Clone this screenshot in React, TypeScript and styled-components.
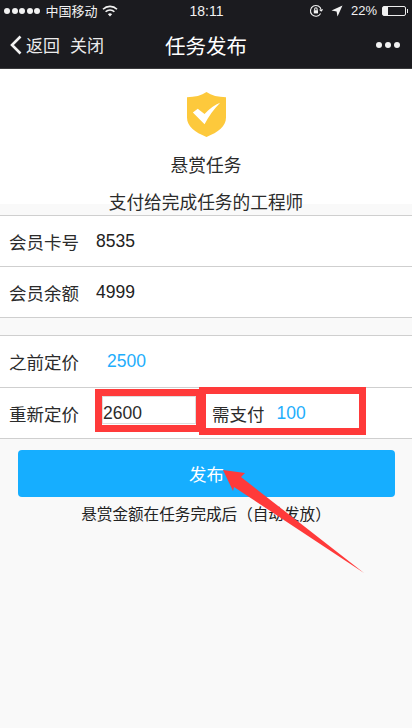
import styled, { createGlobalStyle } from "styled-components";

const GlobalStyle = createGlobalStyle`
  html, body {
    margin: 0;
    padding: 0;
    background: #f9f9f9;
  }
  body {
    font-family: "Liberation Sans", "Noto Sans CJK SC", sans-serif;
    color: #2b2b2b;
  }
  * {
    box-sizing: border-box;
  }
`;

const Page = styled.div`
  position: relative;
  width: 412px;
  height: 728px;
  overflow: hidden;
`;

const TopBar = styled.header`
  height: 69px;
  background: #1b1b1f;
  color: #fff;
  border-bottom: 1px solid #3a3a3c;
`;

const StatusBar = styled.div`
  display: grid;
  grid-template-columns: 1fr auto 1fr;
  align-items: center;
  height: 21px;
  padding: 0 3px 0 4px;
  font-size: 13px;
  color: #f2f2f2;
`;

const StatusSide = styled.div<{ $end?: boolean }>`
  display: flex;
  align-items: center;
  gap: 5px;
  justify-content: ${(p) => (p.$end ? "flex-end" : "flex-start")};
`;

const Dots = styled.div`
  display: flex;
  gap: 1.600px;
`;

const Dot = styled.span`
  width: 6px;
  height: 6px;
  border-radius: 50%;
  background: #f2f2f2;
`;

const Clock = styled.span`
  font-size: 14px;
  font-weight: 500;
`;

const Battery = styled.div`
  position: relative;
  width: 24px;
  height: 10px;
  border: 1px solid #eee;
  border-radius: 2px;
  margin-right: 3px;
  &::before {
    content: "";
    display: block;
    width: 5px;
    height: 100%;
    background: #f2f2f2;
  }
  &::after {
    content: "";
    position: absolute;
    right: -3px;
    top: 2px;
    width: 1px;
    height: 4px;
    background: #eee;
  }
`;

const LocationIcon = styled.svg`
  margin: 0 3px;
`;

const NavBar = styled.nav`
  display: grid;
  grid-template-columns: 1fr auto 1fr;
  align-items: center;
  height: 47px;
  padding: 0 9px;
`;

const NavLeft = styled.div`
  display: flex;
  align-items: center;
  font-size: 17px;
  color: #ececec;
`;

const BackIcon = styled.svg`
  margin-right: 4px;
`;

const CloseLink = styled.span`
  margin-left: 10px;
`;

const NavTitle = styled.h1`
  margin: 0;
  font-size: 20.5px;
  font-weight: 400;
`;

const More = styled.div`
  display: flex;
  justify-content: flex-end;
  gap: 3px;
  margin-right: 3px;
  & > span {
    width: 6px;
    height: 6px;
    border-radius: 50%;
    background: #f2f2f2;
  }
`;

const Intro = styled.section`
  display: flex;
  flex-direction: column;
  align-items: center;
  height: 135px;
  padding-top: 23px;
  background: #fff;
  font-size: 17.7px;
`;

const Shield = styled.svg`
  flex-shrink: 0;
`;

const IntroTitle = styled.div`
  flex-shrink: 0;
  margin-top: 18px;
  line-height: 22px;
`;

const IntroSub = styled.div`
  flex-shrink: 0;
  margin-top: 15px;
  line-height: 22px;
`;

const Group = styled.section<{ $gap: number }>`
  margin-top: ${(p) => p.$gap}px;
  background: #fff;
  border-top: 1px solid #cfcfcf;
`;

const Row = styled.div<{ $tall?: boolean }>`
  display: flex;
  align-items: center;
  height: ${(p) => (p.$tall ? 52 : 51)}px;
  padding-left: 9px;
  border-bottom: 1px solid #cfcfcf;
  font-size: 17.5px;
`;

const Label = styled.span`
  width: 87px;
  flex-shrink: 0;
`;

const Value = styled.span<{ $blue?: boolean; $indent?: number }>`
  padding-left: ${(p) => p.$indent ?? 0}px;
  color: ${(p) => (p.$blue ? "#1eaefc" : "#222")};
`;

const PriceInput = styled.div`
  display: flex;
  align-items: center;
  width: 94px;
  height: 28px;
  margin: -6px 0 0 6px;
  padding-top: 6px;
  border: 1px solid #ddd;
`;

const PayBox = styled.div`
  display: flex;
  align-items: center;
  margin-left: 16px;
  gap: 12px;
`;

const PublishButton = styled.button`
  display: block;
  width: 377px;
  height: 47px;
  margin: 11px 0 0 18px;
  border: 0;
  border-radius: 4px;
  background: #16aeff;
  color: #fff;
  font: inherit;
  font-size: 17.5px;
`;

const Hint = styled.p`
  margin: 8px 0 0;
  text-align: center;
  font-size: 15.6px;
  line-height: 20px;
  color: #222;
`;

const RedFrame = styled.div<{ $x: number; $y: number; $w: number; $h: number }>`
  position: absolute;
  left: ${(p) => p.$x}px;
  top: ${(p) => p.$y}px;
  width: ${(p) => p.$w}px;
  height: ${(p) => p.$h}px;
  border: 7px solid #ff3a3a;
`;

const Arrow = styled.svg`
  position: absolute;
  left: 0;
  top: 0;
  pointer-events: none;
`;

export default function App() {
  return (
    <Page>
      <GlobalStyle />
      <TopBar>
        <StatusBar>
          <StatusSide>
            <Dots>
              <Dot />
              <Dot />
              <Dot />
              <Dot />
              <Dot />
            </Dots>
            <span>中国移动</span>
            <svg width="16" height="12" viewBox="0 0 16 12" fill="none" stroke="#f2f2f2" strokeWidth="1.6">
              <path d="M1 4.2a10 10 0 0 1 14 0" />
              <path d="M3.6 6.8a6.2 6.2 0 0 1 8.8 0" />
              <path d="M8 11.5 5.9 9.2a3 3 0 0 1 4.2 0Z" fill="#f2f2f2" stroke="none" />
            </svg>
          </StatusSide>
          <Clock>18:11</Clock>
          <StatusSide $end>
            <svg width="14" height="14" viewBox="0 0 14 14" fill="none" stroke="#f2f2f2" strokeWidth="1.1">
              <path d="M11.6 9.5A5.4 5.4 0 1 1 12.2 6" />
              <path d="m10.6 5.6 1.6 1.4 1.4-1.6" />
              <rect x="4.8" y="6.2" width="4.2" height="3.2" fill="#f2f2f2" stroke="none" />
              <path d="M5.700 6.200V5a1.200 1.200 0 0 1 2.400 0v1.200" />
            </svg>
            <LocationIcon width="12" height="12" viewBox="0 0 12 12">
              <path d="M11.500.5 6.500 11.500 5.600 6.400.5 5.500Z" fill="#f2f2f2" />
            </LocationIcon>
            <span>22%</span>
            <Battery />
          </StatusSide>
        </StatusBar>
        <NavBar>
          <NavLeft>
            <BackIcon width="13" height="20" viewBox="0 0 13 20" fill="none" stroke="#f2f2f2" strokeWidth="2.600">
              <path d="M11.500 1.500 3 10l8.500 8.500" />
            </BackIcon>
            <span>返回</span>
            <CloseLink>关闭</CloseLink>
          </NavLeft>
          <NavTitle>任务发布</NavTitle>
          <More>
            <span />
            <span />
            <span />
          </More>
        </NavBar>
      </TopBar>

      <Intro>
        <Shield width="39" height="45" viewBox="0 0 40 46">
          <path d="M20 0c5 3.600 12 5.300 20 5.300V26c0 9-8 15-20 20C8 41 0 35 0 26V5.300C8 5.300 15 3.600 20 0Z" fill="#fdc93c" />
          <path d="m6 21 5-4 7 5.500C23 17 29 13 34 11c-6 6-12 14-16 22Z" fill="#fff" />
        </Shield>
        <IntroTitle>悬赏任务</IntroTitle>
        <IntroSub>支付给完成任务的工程师</IntroSub>
      </Intro>

      <Group $gap={11}>
        <Row>
          <Label>会员卡号</Label>
          <Value>8535</Value>
        </Row>
        <Row>
          <Label>会员余额</Label>
          <Value>4999</Value>
        </Row>
      </Group>

      <Group $gap={17}>
        <Row $tall>
          <Label>之前定价</Label>
          <Value $blue $indent={11}>2500</Value>
        </Row>
        <Row>
          <Label>重新定价</Label>
          <PriceInput>2600</PriceInput>
          <PayBox>
            <span>需支付</span>
            <Value $blue>100</Value>
          </PayBox>
        </Row>
      </Group>

      <PublishButton>发布</PublishButton>
      <Hint>悬赏金额在任务完成后（自动发放）</Hint>

      <RedFrame $x={95} $y={389} $w={108} $h={43} />
      <RedFrame $x={199} $y={387} $w={167} $h={48} />
      <Arrow width="412" height="728" viewBox="0 0 412 728">
        <path d="M223 470 245 473 241 477 364 573 234 487 233 491Z" fill="#ff3a3a" />
      </Arrow>
    </Page>
  );
}
